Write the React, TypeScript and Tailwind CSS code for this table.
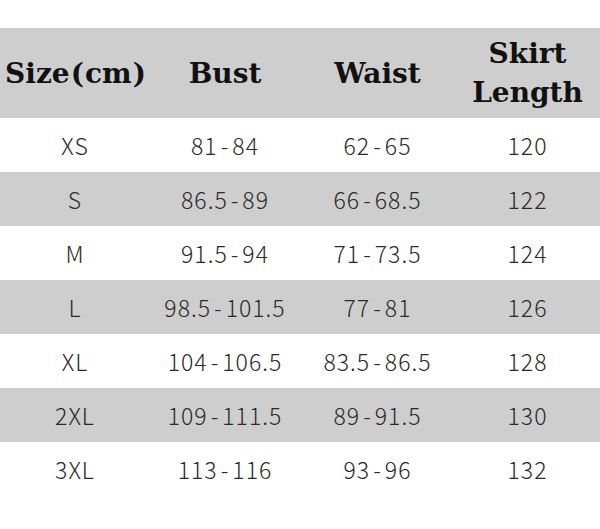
const rows = [
  ['XS', '81-84', '62-65', '120'],
  ['S', '86.5-89', '66-68.5', '122'],
  ['M', '91.5-94', '71-73.5', '124'],
  ['L', '98.5-101.5', '77-81', '126'],
  ['XL', '104-106.5', '83.5-86.5', '128'],
  ['2XL', '109-111.5', '89-91.5', '130'],
  ['3XL', '113-116', '93-96', '132'],
]

const cols = 'grid grid-cols-[150px_150px_155px_145px]'

// the dash between two numbers sits a little apart from them
function Range({ value }: { value: string }) {
  const parts = value.split('-')
  if (parts.length < 2) return <>{value}</>
  return (
    <>
      {parts[0]}
      <span className="px-[3px]">-</span>
      {parts[1]}
    </>
  )
}

export default function App() {
  return (
    <div className="w-[600px] h-[529px] bg-white pt-[28px]">
      <div
        className={`${cols} h-[90px] bg-[#cfcecf] items-center text-[#111] font-bold text-[28px] leading-[39px]`}
        style={{ fontFamily: '"DejaVu Serif", "Liberation Serif", serif' }}
      >
        <div className="text-center pl-[2px]">
          Size<span className="px-[1px]">(</span>cm<span className="px-[1px]">)</span>
        </div>
        <div className="text-center">Bust</div>
        <div className="text-center">Waist</div>
        <div className="text-center">
          Skirt
          <br />
          Length
        </div>
      </div>
      {rows.map((r, i) => (
        <div
          key={r[0]}
          className={`${cols} h-[54px] items-center text-[23px] tracking-[1px] font-light text-[#2a2a2a] ${i % 2 === 1 ? 'bg-[#cfcecf]' : 'bg-white'}`}
          style={{ fontFamily: '"Noto Sans CJK SC", "Noto Sans", sans-serif' }}
        >
          {r.map((c, j) => (
            <div key={j} className="text-center">
              <Range value={c} />
            </div>
          ))}
        </div>
      ))}
    </div>
  )
}
